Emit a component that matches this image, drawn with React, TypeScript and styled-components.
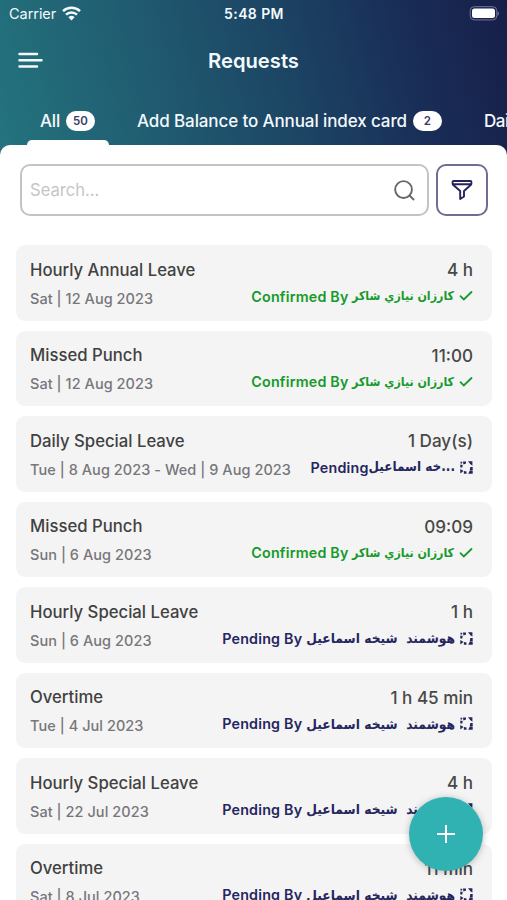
import React from "react";
import styled, { createGlobalStyle } from "styled-components";

const Global = createGlobalStyle`
  *, *::before, *::after { box-sizing: border-box; }
  body { margin: 0; background: #fff; font-family: Inter, "DejaVu Sans", sans-serif; }
`;

const Screen = styled.main`
  position: relative;
  width: 507px;
  height: 900px;
  overflow: hidden;
  background: #fff;
`;

const Header = styled.header`
  height: 160px;
  color: #f4f9fc;
  background: linear-gradient(76deg, #24747e 0%, #205a70 32%, #1c4564 56%, #192d57 80%, #171f49 100%);
`;

const StatusBar = styled.div`
  display: grid;
  grid-template-columns: 1fr auto 1fr;
  align-items: center;
  height: 27px;
  padding: 0 8px 0 9px;
`;

const Carrier = styled.div`
  display: flex;
  align-items: center;
  gap: 6px;
`;

const StatusText = styled.span<{ $weight: number; $size: number; $spacing: number }>`
  font-size: ${(p) => p.$size}px;
  font-weight: ${(p) => p.$weight};
  letter-spacing: ${(p) => p.$spacing}px;
  white-space: nowrap;
`;

const BatterySlot = styled.div`
  display: flex;
  justify-content: flex-end;
`;

const NavBar = styled.div`
  display: grid;
  grid-template-columns: 1fr auto 1fr;
  align-items: center;
  height: 68px;
  padding: 0 18px;
`;

const MenuButton = styled.button`
  display: flex;
  width: 26px;
  padding: 0;
  border: 0;
  background: none;
  color: inherit;
`;

const Title = styled.h1`
  margin: 0;
  font-size: 20.2px;
  line-height: 24px;
  font-weight: 600;
`;

const Tabs = styled.nav`
  display: flex;
  height: 50px;
  padding-left: 27px;
  overflow: hidden;
`;

const Tab = styled.div<{ $width: number }>`
  display: flex;
  flex: none;
  flex-direction: column;
  justify-content: space-between;
  width: ${(p) => p.$width}px;
  margin-right: 16px;
  padding: 15px 0 0 13px;
  font-size: 17px;
  line-height: 22px;
  font-weight: 500;
  white-space: nowrap;
`;

const TabRow = styled.div`
  display: flex;
  align-items: center;
  gap: 6px;
`;

const TabName = styled.span<{ $spacing: number }>`
  letter-spacing: ${(p) => p.$spacing}px;
`;

const Count = styled.span`
  width: 29px;
  height: 20px;
  border-radius: 10px;
  background: #fff;
  color: #3d3866;
  text-align: center;
  font-size: 11.5px;
  line-height: 20px;
  font-weight: 600;
`;

const Indicator = styled.div`
  width: 82px;
  height: 5px;
  margin-left: -13px;
  border-radius: 6px 6px 0 0;
  background: #fff;
`;

const Sheet = styled.section`
  position: relative;
  height: 755px;
  margin-top: -15px;
  padding: 20px 15px 0 16px;
  border-radius: 10px 10px 0 0;
  background: #fff;
`;

const SearchRow = styled.div`
  display: flex;
  gap: 7px;
  height: 51px;
  margin: -1px 4px 30px;
`;

const SearchField = styled.label`
  display: flex;
  align-items: center;
  width: 409px;
  height: 52px;
  padding: 0 12px 0 8px;
  border: 2px solid #c3c3c5;
  border-radius: 10px;
  color: #68686a;
`;

const SearchInput = styled.input`
  flex: 1;
  min-width: 0;
  padding: 0;
  border: 0;
  outline: 0;
  font: 400 16.6px Inter, sans-serif;
  &::placeholder { color: #c5c5c7; }
`;

const FilterButton = styled.button`
  display: grid;
  place-items: center;
  width: 52px;
  height: 52px;
  padding: 0;
  border: 2px solid #6f6d92;
  border-radius: 10px;
  background: #fff;
  color: #25235a;
`;

const List = styled.div`
  display: grid;
  grid-auto-rows: 75.5px;
  gap: 10px;
`;

const Card = styled.article`
  display: flex;
  flex-direction: column;
  padding: 12.5px 19px 0 14px;
  border-radius: 9px;
  background: #f4f4f4;
`;

const CardRow = styled.div<{ $h: number }>`
  display: flex;
  align-items: center;
  justify-content: space-between;
  height: ${(p) => p.$h}px;
  white-space: nowrap;
`;

const Name = styled.h2`
  margin: 0;
  font-size: 16.7px;
  font-weight: 500;
  color: #414141;
`;

const Amount = styled.span`
  font-size: 17.1px;
  font-weight: 500;
  color: #484848;
`;

const DateText = styled.span`
  padding-top: 5px;
  font-size: 14.5px;
  font-weight: 500;
  color: #77777a;
  letter-spacing: 0.05px;
`;

const Status = styled.span<{ $color: string }>`
  display: flex;
  align-items: center;
  height: 22px;
  padding-top: 1px;
  color: ${(p) => p.$color};
`;

const StatusLabel = styled.span`
  font-size: 14.3px;
  font-weight: 600;
  letter-spacing: 0.2px;
`;

const Arabic = styled.span<{ $size: number }>`
  font-family: "DejaVu Sans Condensed", "DejaVu Sans", sans-serif;
  font-stretch: condensed;
  font-size: ${(p) => p.$size}px;
  font-weight: 700;
  line-height: 22px;
  white-space: pre;
`;

const Gap = styled.span<{ $w: number }>`
  width: ${(p) => p.$w}px;
`;

const Fab = styled.button`
  position: absolute;
  left: 409px;
  top: 797px;
  display: grid;
  place-items: center;
  width: 74px;
  height: 74px;
  padding: 0;
  border: 0;
  border-radius: 50%;
  background: #30b2b3;
  color: #fff;
  box-shadow: 0 1px 7px rgba(0, 0, 0, 0.25);
`;

type State = "confirmed" | "pending" | "truncated";
type Request = { name: string; date: string; amount: string; state: State };

const requests: Request[] = [
  { name: "Hourly Annual Leave", date: "Sat | 12 Aug 2023", amount: "4 h", state: "confirmed" },
  { name: "Missed Punch", date: "Sat | 12 Aug 2023", amount: "11:00", state: "confirmed" },
  { name: "Daily Special Leave", date: "Tue | 8 Aug 2023 - Wed | 9 Aug 2023", amount: "1 Day(s)", state: "truncated" },
  { name: "Missed Punch", date: "Sun | 6 Aug 2023", amount: "09:09", state: "confirmed" },
  { name: "Hourly Special Leave", date: "Sun | 6 Aug 2023", amount: "1 h", state: "pending" },
  { name: "Overtime", date: "Tue | 4 Jul 2023", amount: "1 h 45 min", state: "pending" },
  { name: "Hourly Special Leave", date: "Sat | 22 Jul 2023", amount: "4 h", state: "pending" },
  { name: "Overtime", date: "Sat | 8 Jul 2023", amount: "11 min", state: "pending" },
];

const statusParts = {
  confirmed: { label: "Confirmed By", name: "كارزان نيازي شاكر", size: 12.3, gap: 3.5, color: "#159a2b" },
  pending: { label: "Pending By", name: "هوشمند  شيخه اسماعيل", size: 13.7, gap: 4, color: "#25265f" },
  truncated: { label: "Pending", name: "...خه اسماعيل", size: 13.4, gap: 0, color: "#25265f" },
};

const CheckIcon = () => (
  <svg width="14" height="12" viewBox="0 0 14 12" fill="none" stroke="currentColor" strokeWidth="1.8" strokeLinecap="round">
    <path d="M1.5 6.2 4.8 9.5 12.5 2" />
  </svg>
);

const PendingIcon = () => (
  <svg width="13" height="13" viewBox="0 0 13 13" fill="currentColor">
    <path d="M3 .4h3v2L3.4 3.6zM8 .2h4.4v4.6L10.2 3zM12.7 6v3.4L9.8 9l.5-3zM12.7 10v2.7H8.2L10 9.3zM6.5 12.7H3.8L4 10l2.5.4zM.3 12.5V8l3.3 2zM.3 6.5V3.6l2.4.4-.4 2.5zM.5.7h1.7v1.7H.5z" />
  </svg>
);

function RequestCard({ item }: { item: Request }) {
  const s = statusParts[item.state];
  return (
    <Card>
      <CardRow $h={24}><Name>{item.name}</Name><Amount>{item.amount}</Amount></CardRow>
      <CardRow $h={28}>
        <DateText>{item.date}</DateText>
        <Status $color={s.color}>
          <StatusLabel>{s.label}</StatusLabel>
          <Gap $w={s.gap} />
          <Arabic dir="rtl" $size={s.size}>{s.name}</Arabic>
          <Gap $w={5} />
          {item.state === "confirmed" ? <CheckIcon /> : <PendingIcon />}
        </Status>
      </CardRow>
    </Card>
  );
}

export default function App() {
  return (
    <Screen>
      <Global />
      <Header>
        <StatusBar>
          <Carrier>
            <StatusText $size={14.5} $weight={400} $spacing={-0.05}>Carrier</StatusText>
            <svg width="19" height="15" viewBox="0 0 19 15" fill="none" stroke="currentColor" strokeWidth="2.5">
              <path d="M1 5.1a12.3 12.3 0 0 1 17 0M4 8.6a8 8 0 0 1 11 0" />
              <path d="M6.4 11.2a4.6 4.6 0 0 1 6.2 0L9.5 14.4z" fill="currentColor" stroke="none" />
            </svg>
          </Carrier>
          <StatusText $size={14} $weight={600} $spacing={0.4}>5:48 PM</StatusText>
          <BatterySlot>
            <svg width="31" height="15" viewBox="0 0 31 15">
              <rect x="2.2" y=".7" width="26.6" height="13.2" rx="4" fill="none" stroke="#72769b" />
              <rect x="4" y="2.5" width="23" height="9.6" rx="2.5" fill="#fff" />
              <path d="M29.5 5v5q1.5-1 1.5-2.5t-1.5-2.5" fill="#72769b" />
            </svg>
          </BatterySlot>
        </StatusBar>
        <NavBar>
          <MenuButton aria-label="Menu">
            <svg width="26" height="18" viewBox="0 0 26 18" fill="none" stroke="currentColor" strokeWidth="2.5" strokeLinecap="round">
              <path d="M1.5 2h17.5M1.5 8.3h22M1.5 14.5h17.5" />
            </svg>
          </MenuButton>
          <Title>Requests</Title>
        </NavBar>
        <Tabs>
          <Tab $width={81}>
            <TabRow><TabName $spacing={-0.2}>All</TabName><Count>50</Count></TabRow>
            <Indicator />
          </Tab>
          <Tab $width={331}>
            <TabRow><TabName $spacing={-0.11}>Add Balance to Annual index card</TabName><Count>2</Count></TabRow>
          </Tab>
          <Tab $width={80}><TabRow><TabName $spacing={-0.5}>Daily</TabName></TabRow></Tab>
        </Tabs>
      </Header>
      <Sheet>
        <SearchRow>
          <SearchField>
            <SearchInput placeholder="Search..." />
            <svg width="21" height="21" viewBox="0 0 22 22" fill="none" stroke="currentColor" strokeWidth="2">
              <circle cx="10" cy="10" r="8.8" /><path d="m16 16 5 5" />
            </svg>
          </SearchField>
          <FilterButton aria-label="Filter">
            <svg width="22" height="22" viewBox="0 0 22 22" fill="none" stroke="currentColor" strokeWidth="1.9" strokeLinejoin="round">
              <path d="M2.6 2h16.8a1 1 0 0 1 1 1v1.4q0 .9-.7 1.6L13 12v5.5L9.2 20v-8L2.3 6q-.7-.7-.7-1.6V3a1 1 0 0 1 1-1zM2 5.3h18" />
            </svg>
          </FilterButton>
        </SearchRow>
        <List>{requests.map((item, i) => <RequestCard key={i} item={item} />)}</List>
      </Sheet>
      <Fab aria-label="Add request">
        <svg width="18" height="18" viewBox="0 0 18 18" stroke="currentColor" strokeWidth="2"><path d="M9 0v18M0 9h18" /></svg>
      </Fab>
    </Screen>
  );
}
